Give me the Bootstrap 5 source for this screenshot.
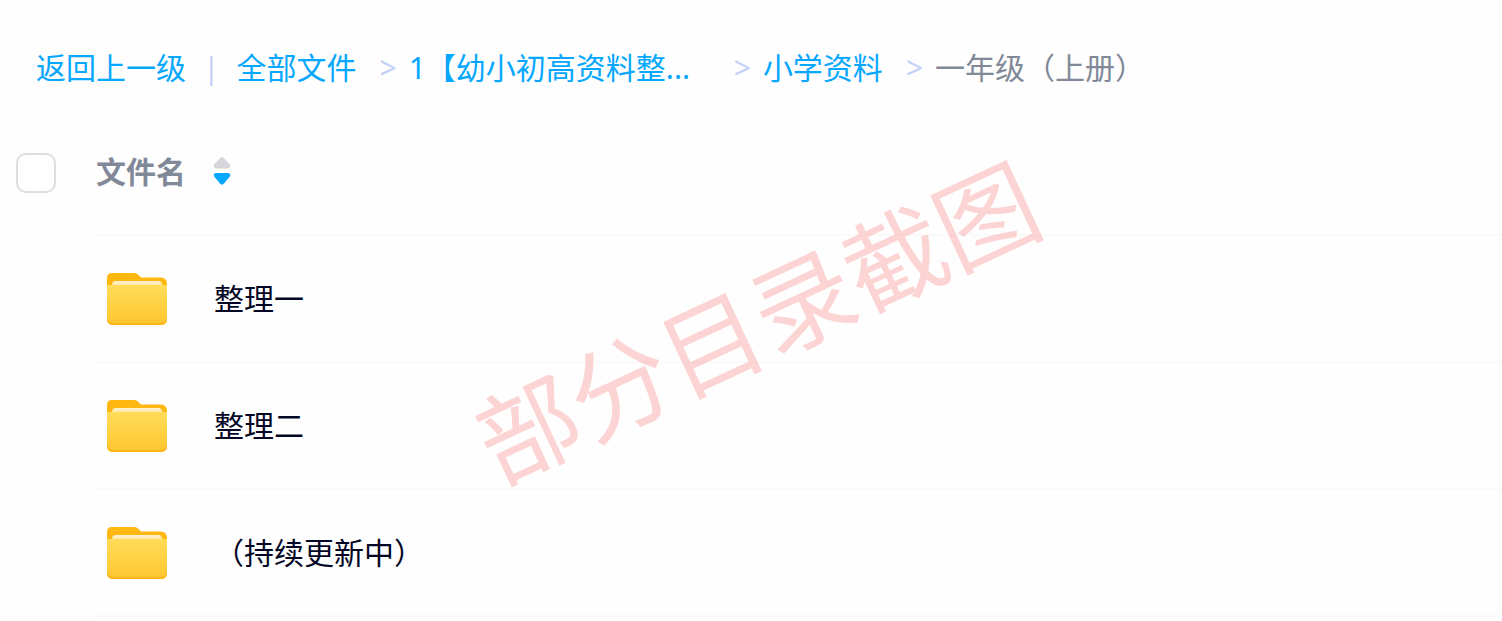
<!DOCTYPE html>
<html lang="zh-CN">
<head>
<meta charset="utf-8">
<meta name="viewport" content="width=device-width, initial-scale=1">
<title>一年级（上册）</title>
<link href="https://cdn.jsdelivr.net/npm/bootstrap@5.3.0/dist/css/bootstrap.min.css" rel="stylesheet">
<style>
  body { font-family: "Noto Sans", "Noto Sans CJK SC", sans-serif; font-size: 30px; line-height: 40px; color: #03081a; background: #fefefe; overflow-x: hidden; }
  a { color: #06a7ff; text-decoration: none; }
  .path-bar { padding: 48px 36px 21px; white-space: nowrap; }
  .path-divider { color: #c4d0f8; margin: 0 17px; }
  .path-arrow { color: #c4d0f8; margin: 0 12px 0 23px; }
  .path-long { width: 302px; }
  .path-current { color: #818999; }
  .file-table { width: 100%; border-collapse: collapse; }
  .file-table th, .file-table td { height: 127px; padding: 0; vertical-align: middle; }
  .file-table thead th { height: 126px; color: #818999; }
  .file-table .name-cell { border-bottom: 2px solid #fafafb; }
  .file-table .check-cell { width: 96px; padding: 2px 0 0 16px; }
  .form-check-input.select-all { width: 40px; height: 40px; margin: 0; border: 2px solid #dddde3; border-radius: 10px; display: block; }
  .sort-btn { line-height: 0; margin-left: 27px; padding-bottom: 2px; }
  .folder { margin-left: 11px; margin-right: 47px; }
  .file-link { color: #030624; }
  .stamp { font-size: 101px; line-height: 100px; color: rgba(246, 44, 40, .2); top: 322px; left: 757px; transform: translate(-50%, -50%) rotate(-25deg); white-space: nowrap; pointer-events: none; }
</style>
</head>
<body>
<svg class="position-absolute" width="0" height="0" aria-hidden="true">
  <defs>
    <linearGradient id="folderFront" x1="0" y1="0" x2="0" y2="1">
      <stop offset="0" stop-color="#ffdc59"/><stop offset="1" stop-color="#ffc62f"/>
    </linearGradient>
    <linearGradient id="folderPaper" x1="0" y1="0" x2="0" y2="1">
      <stop offset="0" stop-color="#fff3d4"/><stop offset="1" stop-color="#ffdc80"/>
    </linearGradient>
    <symbol id="folder" viewBox="0 0 60 54">
      <path d="M0 6Q0 1 5 1H27Q30 1 31.500 3L34 5.500H54Q60 6 60 12V30H0Z" fill="#ffb711"/>
      <path d="M5 16V13Q5 9 9 9H51Q55 9 55 13V16Z" fill="url(#folderPaper)"/>
      <path d="M0 13H60V47Q60 53 54 53H6Q0 53 0 47Z" fill="url(#folderFront)"/>
      <path d="M0 46Q0 53 6 53H54Q60 53 60 46Q58 51 53 51H7Q2 51 0 46Z" fill="#ffb61a"/>
    </symbol>
  </defs>
</svg>

<main class="position-relative">
  <nav class="path-bar d-flex align-items-center" aria-label="路径">
    <a href="#">返回上一级</a>
    <span class="path-divider">|</span>
    <a href="#">全部文件</a>
    <span class="path-arrow">&gt;</span>
    <a href="#" class="path-long">1【幼小初高资料整...</a>
    <span class="path-arrow">&gt;</span>
    <a href="#">小学资料</a>
    <span class="path-arrow">&gt;</span>
    <span class="path-current" aria-current="page">一年级（上册）</span>
  </nav>

  <table class="file-table">
    <thead>
      <tr>
        <th class="check-cell"><input class="form-check-input select-all" type="checkbox" aria-label="全选"></th>
        <th class="name-cell" scope="col">
          <div class="d-flex align-items-center">文件名
            <button type="button" class="sort-btn btn px-0 pt-0 border-0" aria-label="排序">
              <svg width="18" height="30" viewBox="0 0 18 30">
                <path d="M7 2.2Q9 0 11 2.2L16.500 8Q18.500 11.800 15 12.500H3Q-.5 11.800 1.500 8Z" fill="#d6d6dc"/>
                <path d="M3 17H15Q18.500 17.500 16.500 21L11 27.500Q9 29.800 7 27.500L1.500 21Q-.5 17.500 3 17Z" fill="#06a7ff"/>
              </svg>
            </button>
          </div>
        </th>
      </tr>
    </thead>
    <tbody>
      <tr>
        <td></td>
        <td class="name-cell"><div class="d-flex align-items-center">
          <svg class="folder" width="60" height="54" aria-hidden="true"><use href="#folder"/></svg>
          <a class="file-link" href="#">整理一</a></div></td>
      </tr>
      <tr>
        <td></td>
        <td class="name-cell"><div class="d-flex align-items-center">
          <svg class="folder" width="60" height="54" aria-hidden="true"><use href="#folder"/></svg>
          <a class="file-link" href="#">整理二</a></div></td>
      </tr>
      <tr>
        <td></td>
        <td class="name-cell"><div class="d-flex align-items-center">
          <svg class="folder" width="60" height="54" aria-hidden="true"><use href="#folder"/></svg>
          <a class="file-link" href="#">（持续更新中）</a></div></td>
      </tr>
    </tbody>
  </table>

  <div class="stamp position-absolute">部分目录截图</div>
</main>
<script src="https://cdn.jsdelivr.net/npm/bootstrap@5.3.0/dist/js/bootstrap.bundle.min.js"></script>
</body>
</html>
